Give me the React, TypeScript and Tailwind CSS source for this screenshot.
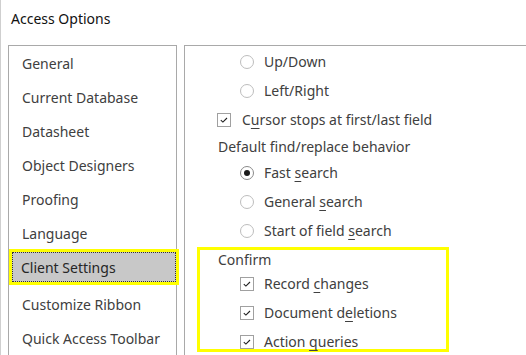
import type { ReactNode } from "react";

const navItems = [
  "General",
  "Current Database",
  "Datasheet",
  "Object Designers",
  "Proofing",
  "Language",
  "Client Settings",
  "Customize Ribbon",
  "Quick Access Toolbar",
];

function Radio({ checked }: { checked?: boolean }) {
  return (
    <span
      className={`w-[14px] h-[14px] rounded-full border shrink-0 flex items-center justify-center bg-white ${
        checked ? "border-[#8a8a8a]" : "border-[#bdbdbd]"
      }`}
    >
      {checked && <span className="w-[6px] h-[6px] rounded-full bg-[#1a1a1a]" />}
    </span>
  );
}

function Check() {
  return (
    <span className="w-[14px] h-[14px] border border-[#a0a0a0] shrink-0 flex items-center justify-center bg-white">
      <svg width="12" height="12" viewBox="0 0 12 12" fill="none">
        <path d="M2.8 6.2L4.9 8.1L9 4" stroke="#1f1f1f" strokeWidth="1.1" />
      </svg>
    </span>
  );
}

function U({ children }: { children: ReactNode }) {
  return <span className="underline underline-offset-[3px] decoration-1">{children}</span>;
}

export default function App() {
  return (
    <div
      className="w-[526px] h-[355px] overflow-hidden bg-white border-l border-[#cfcfcf] text-[14px] text-[#404040]"
      style={{ fontFamily: "'Noto Sans', 'Open Sans', sans-serif" }}
    >
      <div className="h-[36px] flex items-center pl-[10px] text-[#111] text-[14px]">Access Options</div>

      <div className="mt-[9px] flex gap-[7px] pl-[7px]">
        {/* left nav */}
        <div className="w-[169px] h-[400px] shrink-0 border border-[#a9a9a9]">
          {navItems.map((item) =>
            item === "Client Settings" ? (
              <div key={item} className="h-[34px] mb-[3px] flex items-center pl-[3px]">
                <div className="h-[30px] w-full flex items-center pl-[8px] bg-[#c8c8c8] border border-dotted border-[#333] outline-[3px] outline-solid outline-[#ffff00] text-[#262626]">
                  {item}
                </div>
              </div>
            ) : (
              <div key={item} className="h-[34px] flex items-center pl-[13px]">
                {item}
              </div>
            )
          )}
        </div>

        {/* settings */}
        <div className="flex-1 h-[400px] border-l border-t border-[#a9a9a9] pt-[1px]">
          <div className="h-[29px] flex items-center gap-[10px] pl-[55px]">
            <Radio />
            <span>Up/Down</span>
          </div>
          <div className="h-[29px] flex items-center gap-[10px] pl-[55px]">
            <Radio />
            <span>Left/Right</span>
          </div>
          <div className="h-[29px] flex items-center gap-[11px] pl-[32px]">
            <Check />
            <span>
              C<U>u</U>rsor stops at first/last field
            </span>
          </div>
          <div className="h-[24px] flex items-center pl-[33px]">Default find/replace behavior</div>
          <div className="h-[29px] flex items-center gap-[10px] pl-[55px]">
            <Radio checked />
            <span>
              Fast <U>s</U>earch
            </span>
          </div>
          <div className="h-[29px] flex items-center gap-[10px] pl-[55px]">
            <Radio />
            <span>
              General <U>s</U>earch
            </span>
          </div>
          <div className="h-[29px] flex items-center gap-[10px] pl-[55px]">
            <Radio />
            <span>
              Start of field <U>s</U>earch
            </span>
          </div>

          <div className="ml-[12px] mt-[2px] w-[252px] h-[105px] border-[3px] border-[#ffff00]">
            <div className="h-[19px] flex items-center pl-[18px]">Confirm</div>
            <div className="h-[29px] flex items-center gap-[10px] pl-[40px]">
              <Check />
              <span>
                Record <U>c</U>hanges
              </span>
            </div>
            <div className="h-[29px] flex items-center gap-[10px] pl-[40px]">
              <Check />
              <span>
                Document d<U>e</U>letions
              </span>
            </div>
            <div className="h-[29px] flex items-center gap-[10px] pl-[40px]">
              <Check />
              <span>
                Action <U>q</U>ueries
              </span>
            </div>
          </div>
        </div>
      </div>
    </div>
  );
}
